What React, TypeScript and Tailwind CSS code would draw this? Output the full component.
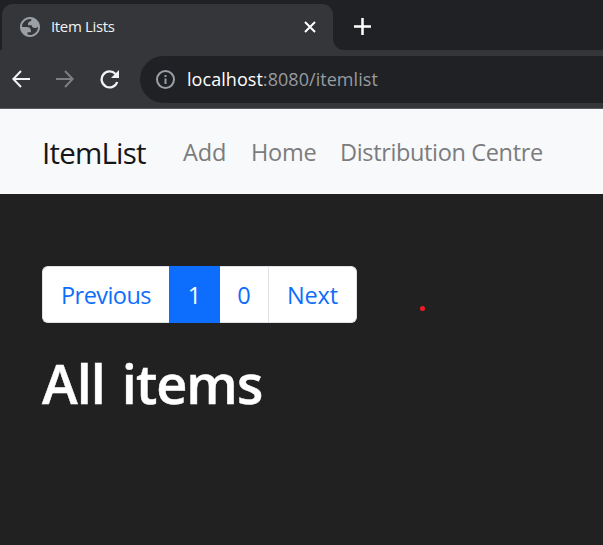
const navLinks = [
  { label: "Add", style: "w-[68px] tracking-[-0.1px]" },
  { label: "Home", style: "w-[89px] tracking-[-0.25px]" },
  { label: "Distribution Centre", style: "w-[220px] tracking-[-0.35px]" },
];

function Globe() {
  return (
    <svg className="-ml-[2px] size-6 shrink-0" viewBox="0 0 24 24" fill="#9aa0a6" fillRule="evenodd">
      <path d="M12 2C6.480 2 2 6.480 2 12s4.480 10 10 10 10-4.480 10-10S17.520 2 12 2zM4 12h4.400c3.407.022 4.922 1.730 4.543 5.127H9.488v2.470a8.004 8.004 0 0 0 10.498-8.083C19.327 12.504 18.332 13 17 13c-2.137 0-3.206-.916-3.206-2.750h-3.748c-.274-2.728.683-4.092 2.870-4.092 0-.975.327-1.597.811-1.970A8.004 8.004 0 0 0 4 12z" />
    </svg>
  );
}

function BrowserChrome() {
  return (
    <header className="h-[109px] border-b border-[#5b5b60] bg-[#35363a]">
      <div className="flex h-[50px] bg-[#202124]">
        <div className="w-[2px] bg-[#202124]" />
        <div className="mt-[4px] flex h-[46px] w-[331px] items-center rounded-t-[11px] bg-[#35363a] pl-[18px]">
          <Globe />
          <span className="ml-[9px] w-[238px] whitespace-nowrap pb-[2px] text-[15px] leading-[20px] tracking-[-0.35px] text-[#f1f3f4]">
            Item Lists
          </span>
          <svg className="ml-[15px] size-[12px]" viewBox="0 0 12 12" stroke="#fff" strokeWidth="2">
            <path d="M1 1l10 10M11 1L1 11" />
          </svg>
        </div>
        <div className="flex h-[50px] flex-1 bg-[#35363a]">
          <div className="flex flex-1 items-center rounded-bl-[11px] bg-[#202124] pl-[21px] pt-[3px]">
            <svg className="size-[17px]" viewBox="0 0 17 17" stroke="#fff" strokeWidth="2.500">
              <path d="M8.500 0v17M0 8.500h17" />
            </svg>
          </div>
        </div>
      </div>
      <div className="flex h-[58px] items-center pl-[12px]">
        <svg className="size-[18px]" viewBox="0 0 18 18" fill="none" stroke="#f1f3f4" strokeWidth="2">
          <path d="M18 9H1.500M9 1L1.300 9 9 17" />
        </svg>
        <svg className="ml-[26px] size-[18px]" viewBox="0 0 18 18" fill="none" stroke="#7d7e82" strokeWidth="2">
          <path d="M0 9h16.500M9 1l7.700 8L9 17" />
        </svg>
        <svg className="ml-[26px] size-[19px]" viewBox="0 0 19 19" fill="none">
          <path d="M15.500 4A8 8 0 1 0 17.200 12" stroke="#f1f3f4" strokeWidth="2.300" />
          <path d="M19 0v8h-8z" fill="#f1f3f4" />
        </svg>
        <div className="ml-[21px] flex h-[47px] flex-1 items-center rounded-l-full bg-[#202124] pl-[16px]">
          <svg className="mt-px size-[19px] shrink-0" viewBox="0 0 19 19" fill="none" stroke="#9aa0a6" strokeWidth="2">
            <circle cx="9.500" cy="9.500" r="8.500" />
            <path d="M9.500 8.500v5.500M9.500 5v2" />
          </svg>
          <span className="ml-[12px] whitespace-nowrap text-[18px] leading-[24px] tracking-[0.05px] text-[#969ba1]">
            <span className="text-white">localhost</span>:8080/itemlist
          </span>
        </div>
      </div>
    </header>
  );
}

function Pagination() {
  return (
    <nav className="flex h-[57px] w-[315px] text-[23.5px] leading-[32px] text-[#0d6efd]">
      <a className="flex w-[127px] items-center rounded-l-[6px] border border-r-0 border-[#dee2e6] bg-white pl-[18px] tracking-[-0.55px]">
        Previous
      </a>
      <a className="flex w-[51px] items-center justify-center bg-[#0d6efd] text-white">1</a>
      <a className="flex w-[49px] items-center justify-center border border-l-0 border-[#dee2e6] bg-white">0</a>
      <a className="flex flex-1 items-center justify-center rounded-r-[6px] border border-l-0 border-[#dee2e6] bg-white tracking-[-0.1px]">
        Next
      </a>
    </nav>
  );
}

export default function App() {
  return (
    <div className="relative h-[545px] w-[603px] overflow-hidden bg-[#212121] font-['Open_Sans',sans-serif]">
      <BrowserChrome />
      <nav className="flex h-[85px] items-center whitespace-nowrap bg-[#f8f9fa] pl-[42px] text-[#7b7c7d]">
        <a className="w-[141px] pt-[2px] text-[29.5px] leading-[45px] tracking-[-0.8px] text-[#151618]">ItemList</a>
        {navLinks.map((link) => (
          <a key={link.label} className={"shrink-0 text-[23.5px] leading-[36px] " + link.style}>
            {link.label}
          </a>
        ))}
      </nav>
      <main className="pl-[42px] pt-[72px]">
        <Pagination />
        <h1 className="mt-[27px] text-[54px] font-semibold leading-[66px] tracking-[-1px] text-white [-webkit-text-stroke:0.5px_white] [word-spacing:4px]">
          All items
        </h1>
      </main>
      <div className="absolute left-[420px] top-[306px] size-[5px] rounded-full bg-[#ed1c24]" />
    </div>
  );
}
